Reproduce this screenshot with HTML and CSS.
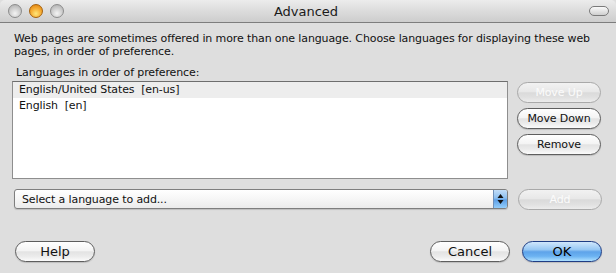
FILE: index.html
```html
<!DOCTYPE html>
<html>
<head>
<meta charset="utf-8">
<title>Advanced</title>
<link rel="stylesheet" href="styles.css">
</head>
<body>
<div class="window">
  <div class="titlebar">
    <div class="lights">
      <span class="light gray"></span>
      <span class="light orange"></span>
      <span class="light gray"></span>
    </div>
    <div class="title">Advanced</div>
    <div class="toolbar-pill"></div>
  </div>
  <div class="content">
    <p class="intro">Web pages are sometimes offered in more than one language. Choose languages for displaying these web pages, in order of preference.</p>
    <div class="label">Languages in order of preference:</div>
    <div class="main-row">
      <div class="list">
        <div class="row selected">English/United States&nbsp; [en-us]</div>
        <div class="row">English&nbsp; [en]</div>
      </div>
      <div class="side-buttons">
        <button class="btn disabled">Move Up</button>
        <button class="btn">Move Down</button>
        <button class="btn">Remove</button>
      </div>
    </div>
    <div class="add-row">
      <div class="select">
        <span class="select-text">Select a language to add...</span>
        <span class="stepper">
          <svg width="7" height="12" viewBox="0 0 7 12"><path d="M3.5 1 L6.5 5 L0.5 5 Z" fill="#111"/><path d="M0.5 7 L6.5 7 L3.5 11 Z" fill="#111"/></svg>
        </span>
      </div>
      <button class="btn disabled">Add</button>
    </div>
    <div class="bottom-row">
      <button class="btn wide">Help</button>
      <div class="bottom-right">
        <button class="btn wide">Cancel</button>
        <button class="btn wide default">OK</button>
      </div>
    </div>
  </div>
</div>
</body>
</html>
```
FILE: styles.css
```css
html, body {
  margin: 0;
  padding: 0;
  background: #dedede;
}
body {
  width: 616px;
  height: 273px;
  overflow: hidden;
  font-family: "DejaVu Sans", "Liberation Sans", sans-serif;
  font-size: 11px;
  color: #111;
}
.window {
  width: 616px;
  height: 273px;
  background: #dedede;
  border-radius: 5px 5px 0 0;
  overflow: hidden;
  display: flex;
  flex-direction: column;
}
.titlebar {
  height: 22px;
  flex: none;
  border-bottom: 1px solid #7d7d7d;
  background: linear-gradient(to bottom, #ececec 0%, #dcdcdc 50%, #cdcdcd 100%);
  display: grid;
  grid-template-columns: 1fr auto 1fr;
  align-items: center;
}
.lights {
  display: flex;
  gap: 7px;
  padding-left: 8px;
}
.light {
  width: 12px;
  height: 12px;
  border-radius: 50%;
  display: block;
}
.light.gray {
  border: 1px solid #8c8c8c;
  background: radial-gradient(circle at 50% 70%, #f4f4f4 0%, #d2d2d2 45%, #a8a8a8 100%);
}
.light.orange {
  border: 1px solid #a5600c;
  background: radial-gradient(circle at 50% 72%, #ffe77a 0%, #f7b23a 45%, #dd7a06 100%);
}
.title {
  font-size: 13px;
  color: #1a1a1a;
  padding-top: 1px;
  padding-right: 4px;
}
.toolbar-pill {
  justify-self: end;
  margin-right: 7px;
  width: 18px;
  height: 8px;
  border: 1px solid #7a7a7a;
  border-radius: 5px;
  background: linear-gradient(to bottom, #fafafa, #cfcfcf);
}
.content {
  padding: 9px 14px 0 12px;
  display: flex;
  flex-direction: column;
  letter-spacing: -0.12px;
}
.intro {
  margin: 0 0 0 2px;
  line-height: 13px;
}
.label {
  margin: 8px 0 0 4px;
  line-height: 13px;
}
.main-row {
  display: flex;
  gap: 9px;
  margin-top: 2px;
}
.list {
  width: 494px;
  height: 96px;
  background: #fff;
  border: 1px solid #8e8e8e;
  border-top-color: #6e6e6e;
}
.row {
  height: 16px;
  line-height: 16px;
  padding-left: 6px;
}
.row.selected {
  background: #ededed;
}
.side-buttons {
  display: flex;
  flex-direction: column;
  gap: 5px;
  padding-top: 1px;
}
.btn {
  width: 84px;
  height: 21px;
  padding: 0;
  border: 1px solid #5e5e5e;
  border-radius: 11px;
  background: linear-gradient(to bottom, #ffffff 0%, #f4f4f4 45%, #e3e3e3 52%, #ebebeb 75%, #fbfbfb 100%);
  box-shadow: 0 1px 1px rgba(0,0,0,0.15);
  font-family: "DejaVu Sans", "Liberation Sans", sans-serif;
  font-size: 11px;
  letter-spacing: -0.12px;
  color: #111;
}
.btn.disabled {
  border-color: #a9a9a9;
  background: linear-gradient(to bottom, #f2f2f2 0%, #e8e8e8 45%, #dadada 52%, #e0e0e0 75%, #ececec 100%);
  color: #fbfbfb;
  box-shadow: none;
}
.btn.wide {
  width: 80px;
  font-size: 13px;
  letter-spacing: 0;
}
.btn.default {
  border-color: #1f3d84;
  background: linear-gradient(to bottom, #d0e7fc 0%, #97c8f4 40%, #5ea3e9 52%, #6cb3f2 75%, #aee0ff 100%);
  color: #000;
}
.add-row {
  display: flex;
  gap: 10px;
  margin-top: 10px;
  align-items: flex-start;
}
.select {
  margin-left: 2px;
  width: 492px;
  height: 18px;
  border: 1px solid #7e7e7e;
  border-radius: 3px;
  background: linear-gradient(to bottom, #ffffff 0%, #f6f6f6 50%, #ebebeb 100%);
  display: flex;
  align-items: center;
  justify-content: space-between;
  box-shadow: 0 1px 1px rgba(0,0,0,0.15);
}
.select-text {
  padding-left: 7px;
}
.stepper {
  width: 13px;
  height: 18px;
  border-left: 1px solid #6f8fb8;
  border-radius: 0 2px 2px 0;
  background: linear-gradient(to bottom, #c2ddf8 0%, #8cbff0 45%, #5d9fe6 55%, #93cdfa 100%);
  display: flex;
  align-items: center;
  justify-content: center;
}
.bottom-row {
  display: flex;
  justify-content: space-between;
  margin-top: 31px;
  padding-left: 3px;
}
.bottom-right {
  display: flex;
  gap: 12px;
}
```
